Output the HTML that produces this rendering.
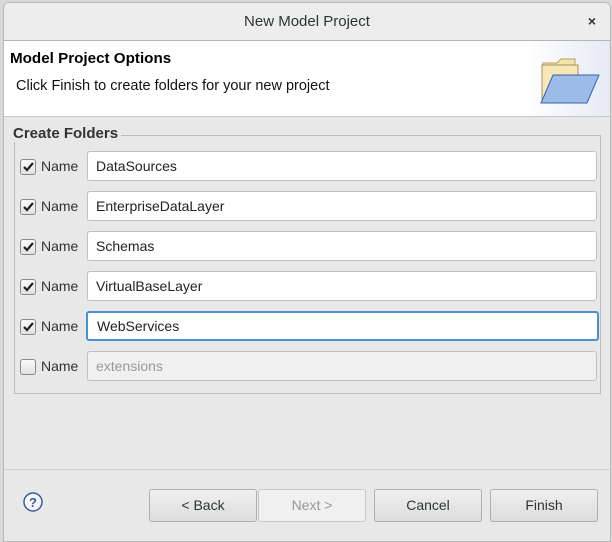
<!DOCTYPE html>
<html><head><style>
body{margin:0;width:612px;height:540px;background:#d8d8d8;font-family:"Liberation Sans",sans-serif;position:relative;overflow:hidden}
.dlg{position:absolute;left:3px;top:2px;width:606px;height:538px;background:#e8e8e8;border:1px solid #b8b8b8;border-radius:6px 6px 0 0;overflow:hidden}
.title{position:absolute;left:0;top:0;width:606px;height:37px;background:#ededed;border-bottom:1px solid #b5b5b5;text-align:center;line-height:37px;font-size:15px;color:#2e3436}
.x{position:absolute;right:14px;top:0;font-size:14px;font-weight:bold;color:#333}
.hdr{position:absolute;left:0;top:38px;width:606px;height:75px;background:#fff;border-bottom:1px solid #c8c8c8}
.h1{position:absolute;left:6px;top:9px;font-weight:bold;font-size:15.2px;color:#000}
.h2{position:absolute;left:12px;top:37px;font-size:14.5px;color:#111}
.grp{position:absolute;left:10px;top:132px;width:585px;height:257px;border:1px solid #bcbcbc}
.gl{position:absolute;left:6px;top:122px;background:#e8e8e8;padding:0 3px;font-weight:bold;font-size:15px;color:#333}
.cb{position:absolute;left:16px;width:14px;height:14px;border:1px solid #8a8a8a;border-radius:3px;background:linear-gradient(#fafafa,#e0e0e0)}
.nm{position:absolute;left:37px;font-size:14px;color:#2e3436}
.tf{position:absolute;left:83px;width:500px;height:28px;border:1px solid #c0c0c0;border-radius:3px;background:#fff;font-size:14px;line-height:28px;padding-left:8px;color:#222}
.btn{position:absolute;top:486px;width:106px;height:31px;border:1px solid #b0b0b0;border-radius:3px;background:linear-gradient(#f0f0f0,#dcdcdc);text-align:center;line-height:31px;font-size:14px;color:#2e3436}
</style></head><body>
<div class="dlg">
<div class="title">New Model Project<span class="x">×</span></div>
<div class="hdr" style="background:linear-gradient(90deg,#fff 86%,#e6eaf4)">
<div class="h1">Model Project Options</div>
<div class="h2">Click Finish to create folders for your new project</div>
<svg style="position:absolute;left:535px;top:14px" width="62" height="56" viewBox="0 0 62 56">
<path d="M4 8h14l4-4h14v8H4z" fill="#f5e3a8" stroke="#b8a060"/>
<rect x="3" y="10" width="36" height="38" fill="#f6e7b5" stroke="#a89060"/>
<path d="M2 48L14 20h46L48 48z" fill="#9bbbe8" stroke="#3a60b0"/>
</svg>
</div>
<div class="grp"></div>
<div class="gl">Create Folders</div>

<div class="cb" style="top:156px"><svg width="14" height="14"><path d="M3 7l3 3 6-7" stroke="#222" stroke-width="2.2" fill="none"/></svg></div>
<div class="nm" style="top:155px">Name</div><div class="tf" style="top:148px">DataSources</div>

<div class="cb" style="top:196px"><svg width="14" height="14"><path d="M3 7l3 3 6-7" stroke="#222" stroke-width="2.2" fill="none"/></svg></div>
<div class="nm" style="top:195px">Name</div><div class="tf" style="top:188px">EnterpriseDataLayer</div>

<div class="cb" style="top:236px"><svg width="14" height="14"><path d="M3 7l3 3 6-7" stroke="#222" stroke-width="2.2" fill="none"/></svg></div>
<div class="nm" style="top:235px">Name</div><div class="tf" style="top:228px">Schemas</div>

<div class="cb" style="top:276px"><svg width="14" height="14"><path d="M3 7l3 3 6-7" stroke="#222" stroke-width="2.2" fill="none"/></svg></div>
<div class="nm" style="top:275px">Name</div><div class="tf" style="top:268px">VirtualBaseLayer</div>

<div class="cb" style="top:316px"><svg width="14" height="14"><path d="M3 7l3 3 6-7" stroke="#222" stroke-width="2.2" fill="none"/></svg></div>
<div class="nm" style="top:315px">Name</div><div class="tf" style="top:308px;border:2px solid #4a90d9;height:26px;line-height:26px;left:82px;padding-left:9px">WebServices</div>

<div class="cb" style="top:356px"></div>
<div class="nm" style="top:355px">Name</div><div class="tf" style="top:348px;background:#f0f0f0;color:#999">extensions</div>

<div style="position:absolute;left:0;top:466px;width:606px;border-top:1px solid #d0d0d0"></div>
<svg style="position:absolute;left:19px;top:489px" width="20" height="20"><circle cx="10" cy="10" r="9" fill="#f4f6fb" stroke="#3a5a9a" stroke-width="1.5"/><text x="10" y="15" text-anchor="middle" font-family="Liberation Sans" font-weight="bold" font-size="13" fill="#3a5a9a">?</text></svg>
<div class="btn" style="left:145px">&lt; Back</div>
<div class="btn" style="left:254px;background:#f0f0f0;color:#999;border-color:#c8c8c8">Next &gt;</div>
<div class="btn" style="left:370px">Cancel</div>
<div class="btn" style="left:486px">Finish</div>
</div>
</body></html>
